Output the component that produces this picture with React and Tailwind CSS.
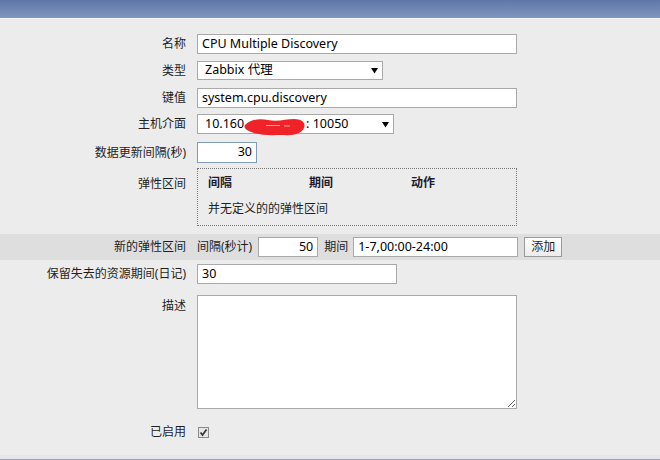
import React from "react";

function Label({ children, top }) {
  return (
    <div className={`w-[186px] shrink-0 text-right text-[12px] text-[#1f1f1f] ${top ? "pt-[2px]" : ""}`}>
      {children}
    </div>
  );
}

function Arrow() {
  return (
    <svg width="7" height="7" viewBox="0 0 7 7" className="shrink-0">
      <path d="M0 1 L7 1 L3.5 6.5 Z" fill="#000" />
    </svg>
  );
}

export default function App() {
  return (
    <div className="w-[660px] h-[460px] bg-[#ececec] overflow-hidden font-['Noto_Sans','Noto_Sans_CJK_SC',sans-serif] text-[12px]">
      <div className="h-[17px] bg-gradient-to-b from-[#5d77a8] to-[#7e95bc]" />
      <div className="h-[1px] bg-[#8a93a6]" />
      <div className="h-[1px] bg-[#f6f6f8]" />

      <div className="pt-[15px]">
        {/* 名称 */}
        <div className="flex items-center">
          <Label>名称</Label>
          <div className="ml-[11px] w-[320px] h-[20px] bg-white border border-[#a9a9a9] flex items-center pl-[4px] text-[12.5px] text-black">
            CPU Multiple Discovery
          </div>
        </div>

        {/* 类型 */}
        <div className="flex items-center mt-[7px]">
          <Label>类型</Label>
          <div className="ml-[11px] w-[186px] h-[19px] bg-white border border-[#a9a9a9] flex items-center justify-between pl-[7px] pr-[4px] text-[12.5px] text-black">
            <span>Zabbix 代理</span>
            <Arrow />
          </div>
        </div>

        {/* 键值 */}
        <div className="flex items-center mt-[8px]">
          <Label>键值</Label>
          <div className="ml-[11px] w-[320px] h-[20px] bg-white border border-[#a9a9a9] flex items-center pl-[4px] text-[12.5px] text-black">
            system.cpu.discovery
          </div>
        </div>

        {/* 主机介面 */}
        <div className="flex items-center mt-[6px]">
          <Label>主机介面</Label>
          <div className="relative ml-[11px] w-[197px] h-[20px] bg-white border border-[#a9a9a9] flex items-center justify-between pl-[7px] pr-[4px] text-[12.5px] text-black">
            <span>
              10.160<span className="inline-block w-[62px]" />: 10050
            </span>
            <Arrow />
            <svg className="absolute left-[46px] top-[2px]" width="62" height="20" viewBox="0 0 62 20">
              <path
                d="M1 8 C 6 3, 14 1, 24 3 C 34 5, 42 2, 50 2 C 58 2, 62 6, 60 11 C 58 16, 50 19, 40 18 C 30 18, 20 19, 10 16 C 3 14, -1 11, 1 8 Z"
                fill="#ef2328"
              />
              <path d="M22 8.5 L 36 8.5 M40 9 L 46 9" stroke="#ff9ea0" strokeWidth="1" />
            </svg>
          </div>
        </div>

        {/* 数据更新间隔 */}
        <div className="flex items-center mt-[8px]">
          <Label>数据更新间隔(秒)</Label>
          <div className="ml-[11px] w-[60px] h-[21px] bg-white border border-[#7f9db9] flex items-center justify-end pr-[4px] text-[12.5px] text-black">
            30
          </div>
        </div>

        {/* 弹性区间 */}
        <div className="flex items-start mt-[5px]">
          <Label top>
            <div className="pt-[5px]">弹性区间</div>
          </Label>
          <div className="ml-[11px] w-[320px] h-[58px] border border-dotted border-[#777] px-[10px] pt-[5px]">
            <div className="flex font-bold text-[#221a2e] text-[12px]">
              <span className="w-[101px]">间隔</span>
              <span className="w-[102px]">期间</span>
              <span>动作</span>
            </div>
            <div className="mt-[8px] text-[#1f1f1f]">并无定义的的弹性区间</div>
          </div>
        </div>

        {/* 新的弹性区间 */}
        <div className="flex items-center mt-[8px] h-[26px] bg-[#dedede]">
          <Label>新的弹性区间</Label>
          <div className="ml-[11px] flex items-center">
            <span className="text-[#1f1f1f]">间隔(秒计)</span>
            <div className="ml-[6px] w-[60px] h-[20px] bg-white border border-[#a9a9a9] flex items-center justify-end pr-[4px] text-[12.5px] text-black">
              50
            </div>
            <span className="ml-[6px] text-[#1f1f1f]">期间</span>
            <div className="ml-[5px] w-[165px] h-[20px] bg-white border border-[#a9a9a9] flex items-center pl-[4px] text-[12.5px] text-black">
              1-7,00:00-24:00
            </div>
            <div className="ml-[6px] w-[38px] h-[20px] border border-[#9a9a9a] bg-gradient-to-b from-[#ffffff] to-[#ececec] flex items-center justify-center text-[#1f1f1f]">
              添加
            </div>
          </div>
        </div>

        {/* 保留失去的资源期间 */}
        <div className="flex items-center mt-[4px]">
          <Label>保留失去的资源期间(日记)</Label>
          <div className="ml-[11px] w-[200px] h-[20px] bg-white border border-[#a9a9a9] flex items-center pl-[4px] text-[12.5px] text-black">
            30
          </div>
        </div>

        {/* 描述 */}
        <div className="flex items-start mt-[11px]">
          <Label top>描述</Label>
          <textarea
            className="ml-[11px] w-[320px] h-[114px] bg-white border border-[#a9a9a9] outline-none"
            defaultValue=""
          />
        </div>

        {/* 已启用 */}
        <div className="flex items-center mt-[14px]">
          <Label>已启用</Label>
          <div className="ml-[12px] w-[11px] h-[11px] border border-[#8a8a8a] bg-[#e6e6e6] flex items-center justify-center">
            <svg width="9" height="9" viewBox="0 0 9 9">
              <path d="M1.5 4.5 L3.5 7 L7.5 1.5" stroke="#3a3a3a" strokeWidth="1.8" fill="none" />
            </svg>
          </div>
        </div>
      </div>

      <div className="mt-[14px] h-[4px] bg-[#e3e7ec]" />
      <div className="h-[2px] bg-[#9aa3ad]" />
    </div>
  );
}
